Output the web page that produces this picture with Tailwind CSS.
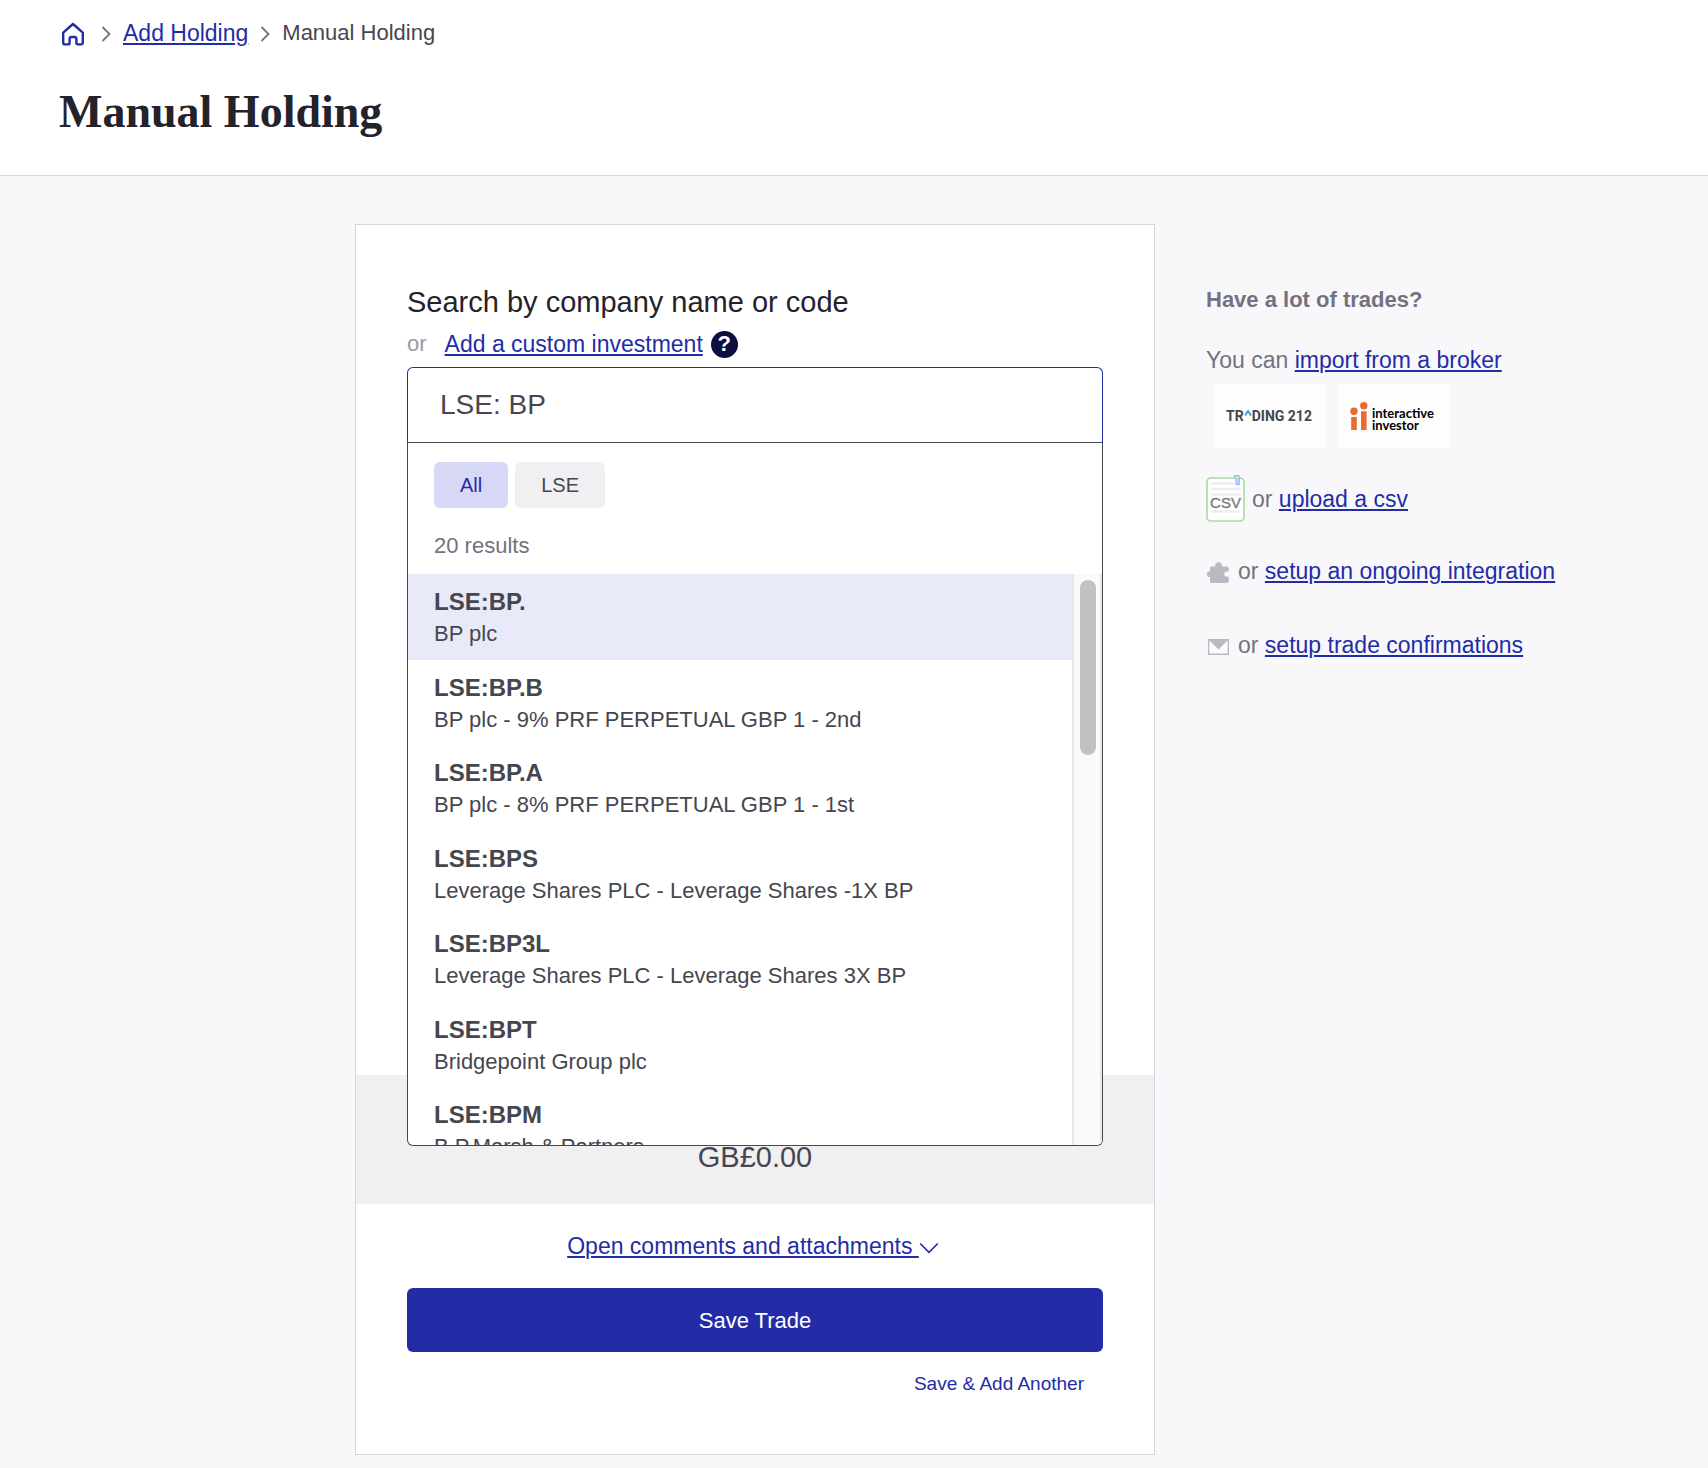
<!DOCTYPE html>
<html lang="en">
<head>
<meta charset="utf-8">
<meta name="viewport" content="width=device-width, initial-scale=1">
<title>Manual Holding</title>
<script src="https://cdn.jsdelivr.net/npm/@tailwindcss/browser@4"></script>
</head>
<body class="min-h-screen bg-[#f8f8fb] font-['Liberation_Sans',Arial,sans-serif] text-[23px] leading-7 text-[#46464f]">

<header class="border-b border-[#d5d5db] bg-white pt-[17px] pr-8 pb-[35px] pl-[59px]">
  <nav aria-label="Breadcrumb" class="flex h-8 items-center gap-3 pl-0.5">
    <a href="#" aria-label="Home" class="mt-0.5 mr-1 text-[#232ca6]">
      <svg class="block size-6" viewBox="0 0 24 24" fill="none" stroke="currentColor" stroke-width="2.4" stroke-linejoin="round" stroke-linecap="round"><path d="M2.2 10.6 12 2l9.8 8.600v10.200a1.600 1.600 0 0 1-1.600 1.600h-3.600a1.200 1.200 0 0 1-1.200-1.200v-4.200a2 2 0 0 0-2-2h-2.800a2 2 0 0 0-2 2v4.200a1.200 1.200 0 0 1-1.200 1.200H3.800a1.600 1.600 0 0 1-1.600-1.600z"/></svg>
    </a>
    <svg class="mt-0.5 h-4 w-2.5" viewBox="0 0 10 16" fill="none" stroke="#737280" stroke-width="1.800"><path d="m1.500 1 7 7-7 7"/></svg>
    <a href="#" class="text-[#232ca6] underline decoration-2 underline-offset-2">Add Holding</a>
    <svg class="mt-0.5 h-4 w-2.5" viewBox="0 0 10 16" fill="none" stroke="#737280" stroke-width="1.800"><path d="m1.500 1 7 7-7 7"/></svg>
    <span class="text-[22px]" aria-current="page">Manual Holding</span>
  </nav>
  <h1 class="mt-[35px] font-['Liberation_Serif',serif] text-[46px] leading-[56px] font-bold text-[#24232b]">Manual Holding</h1>
</header>

<main class="grid grid-cols-[355fr_minmax(0,800fr)_553fr] items-start pt-12 pb-[13px]">
  <form class="col-start-2 border border-[#d5d5db] bg-white">
    <section class="min-h-[850px] px-[51px] pt-[59px]">
      <label for="search" class="block text-[29px] leading-9 text-[#24232b]">Search by company name or code</label>
      <div class="mt-2.5 flex h-7 items-center">
        <span class="mr-[18px] text-[22px] text-[#9a99a6]">or</span>
        <a href="#" class="mr-2 text-[#232ca6] underline decoration-2 underline-offset-2">Add a custom investment</a>
        <button type="button" aria-label="Help" class="flex size-[27px] items-center justify-center rounded-full bg-[#0c0f3d] text-[22px] font-bold text-white">?</button>
      </div>

      <div class="relative mt-[9px]">
        <input id="search" type="text" value="LSE: BP" autocomplete="off" class="block h-[76px] w-full rounded-t-md border border-[#232ca6] border-b-[#46464f] bg-white px-8 text-[28px] outline-none">

        <div class="absolute inset-x-0 top-full flex h-[703px] flex-col overflow-hidden rounded-b-md border-x border-b border-[#46464f] bg-white">
          <div class="flex gap-[7px] px-[26px] pt-[19px] text-[20px]">
            <button type="button" class="h-[46px] rounded-md bg-[#d7d8f5] px-[26px] text-[#232ca6]">All</button>
            <button type="button" class="h-[46px] rounded-md bg-[#f0f0f2] px-[26px]">LSE</button>
          </div>
          <p class="mt-6 mb-3.5 px-[26px] text-[22px] text-[#737280]">20 results</p>
          <div class="flex min-h-0 flex-1">
            <div class="min-w-0 flex-1 overflow-hidden">
              <ul role="listbox" aria-label="Results" class="grid h-[599px] auto-rows-fr text-[22px]">
                <li role="option" aria-selected="true" class="bg-[#e9eaf9] px-[26px] pt-3"><strong class="block pb-0.5 text-[24px] leading-8">LSE:BP.</strong>BP plc</li>
                <li role="option" class="px-[26px] pt-3"><strong class="block pb-0.5 text-[24px] leading-8">LSE:BP.B</strong>BP plc - 9% PRF PERPETUAL GBP 1 - 2nd</li>
                <li role="option" class="px-[26px] pt-3"><strong class="block pb-0.5 text-[24px] leading-8">LSE:BP.A</strong>BP plc - 8% PRF PERPETUAL GBP 1 - 1st</li>
                <li role="option" class="px-[26px] pt-3"><strong class="block pb-0.5 text-[24px] leading-8">LSE:BPS</strong>Leverage Shares PLC - Leverage Shares -1X BP</li>
                <li role="option" class="px-[26px] pt-3"><strong class="block pb-0.5 text-[24px] leading-8">LSE:BP3L</strong>Leverage Shares PLC - Leverage Shares 3X BP</li>
                <li role="option" class="px-[26px] pt-3"><strong class="block pb-0.5 text-[24px] leading-8">LSE:BPT</strong>Bridgepoint Group plc</li>
                <li role="option" class="px-[26px] pt-3"><strong class="block pb-0.5 text-[24px] leading-8">LSE:BPM</strong>B.P.Marsh &amp; Partners</li>
              </ul>
            </div>
            <div aria-hidden="true" class="w-[30px] border-x-2 border-[#e8e8e8] bg-[#fafafa] pt-1.5 pl-1.5">
              <div class="h-[175px] w-4 rounded-full bg-[#c1c1c1]"></div>
            </div>
          </div>
        </div>
      </div>
    </section>

    <div class="bg-[#f0f0f2] pt-16 pb-[29px] text-center text-[29px] leading-9">GB£0.00</div>

    <section class="px-[51px] pt-7 pb-14">
      <button type="button" class="mx-auto flex items-center pr-1 text-[#232ca6]">
        <span class="underline decoration-2 underline-offset-2">Open comments and attachments&nbsp;</span>
        <svg class="mt-1 h-3 w-5" viewBox="0 0 20 12" fill="none" stroke="currentColor" stroke-width="1.700"><path d="m1.200 1.500 8.800 8.800 8.800-8.800"/></svg>
      </button>
      <button type="submit" class="mt-7 block h-16 w-full rounded-md bg-[#232ca6] pt-0.5 text-[22px] text-white">Save Trade</button>
      <div class="mt-[18px] flex justify-end pr-[19px]">
        <button type="button" class="text-[19px] leading-7 text-[#232ca6]">Save &amp; Add Another</button>
      </div>
    </section>
  </form>

  <aside class="pt-[62px] pl-[51px] text-[#737280]">
    <h2 class="text-[22px] leading-7 font-bold">Have a lot of trades?</h2>
    <p class="mt-8">You can <a href="#" class="text-[#232ca6] underline decoration-2 underline-offset-2">import from a broker</a></p>
    <div class="mt-2.5 flex gap-3 pl-[7px]">
      <a href="#" aria-label="Trading 212" class="flex h-16 w-28 items-center justify-center bg-[#fdfdfd] font-['Roboto',sans-serif] text-[14px] leading-4 font-bold text-[#46464a]">
        <span>TR</span>
        <svg class="mb-1.5 h-1.5 w-2" viewBox="0 0 8 6" fill="none" stroke="#4a9fe0" stroke-width="2"><path d="M1 5.500 4 1l3 4.500"/></svg>
        <span class="whitespace-pre">DING 212</span>
      </a>
      <a href="#" aria-label="Interactive Investor" class="flex h-16 w-28 items-center gap-1 bg-[#fdfdfd] pl-[13px] font-['Lato',sans-serif] text-[13px] leading-3 font-bold text-black">
        <svg class="h-7 w-[18px] shrink-0" viewBox="0 0 18 28" fill="#ec6a2c"><circle cx="4" cy="9.300" r="3.700"/><circle cx="13.800" cy="3.700" r="3.700"/><path d="M1.200 15h5.600v13H1.200zM11 9.300h5.600V28H11z"/></svg>
        <span class="flex flex-col pt-1.5"><span>interactive</span><span>investor</span></span>
      </a>
    </div>
    <p class="mt-[27px] flex items-center gap-1.5">
      <svg class="h-[47px] w-10 shrink-0" viewBox="0 0 40 47" aria-hidden="true">
        <rect x="1" y="3" width="37" height="43" rx="4" fill="#fff" stroke="#a6dba0" stroke-width="1.600"/>
        <path d="M6 8.500h22M6 14h28M6 19.500h28M6 36.500h28" stroke="#ededef" stroke-width="2.400" stroke-linecap="round"/>
        <text x="19.500" y="32.500" text-anchor="middle" font-family="Liberation Sans, sans-serif" font-size="15" fill="#7d7d7d" stroke="#7d7d7d" stroke-width=".4">CSV</text>
        <path d="M28.500 3V1.500a1 1 0 0 1 1-1h2.500a1.200 1.200 0 0 1 1.200 1.200V9.500h-3V3" fill="#cfe0fb" stroke="#8cb3f0" stroke-width="1.200"/>
      </svg>
      <span>or <a href="#" class="text-[#232ca6] underline decoration-2 underline-offset-2">upload a csv</a></span>
    </p>
    <p class="mt-[35px] flex items-center gap-2">
      <svg class="mt-1 size-6 shrink-0" viewBox="0 0 24 24" fill="#b9b8c3" aria-hidden="true"><path d="M5.500 5.500h4C8.600 3 10.400 1.200 12.600 1.200S16.600 3 15.700 5.500H21a1.800 1.800 0 0 1 1.800 1.800v3.400c-2.800-.9-4.600.4-4.600 2.400s1.800 3.300 4.600 2.400v4.700A1.800 1.800 0 0 1 21 22H5.500a1.500 1.500 0 0 1-1.500-1.500v-4.200c-2 .2-3-1.300-3-3s1-3.200 3-3V7a1.500 1.500 0 0 1 1.500-1.500z"/></svg>
      <span>or <a href="#" class="text-[#232ca6] underline decoration-2 underline-offset-2">setup an ongoing integration</a></span>
    </p>
    <p class="mt-[46px] flex items-center gap-2">
      <svg class="mt-1 size-6 shrink-0" viewBox="0 0 24 24" aria-hidden="true"><path d="M2.700 4.700h19.600v14.600H2.700z" fill="#fbfbfd" stroke="#b9b8c3" stroke-width="1.400"/><path d="M2.500 4.500h20l-10 10z" fill="#b9b8c3"/></svg>
      <span>or <a href="#" class="text-[#232ca6] underline decoration-2 underline-offset-2">setup trade confirmations</a></span>
    </p>
  </aside>
</main>
</body>
</html>
